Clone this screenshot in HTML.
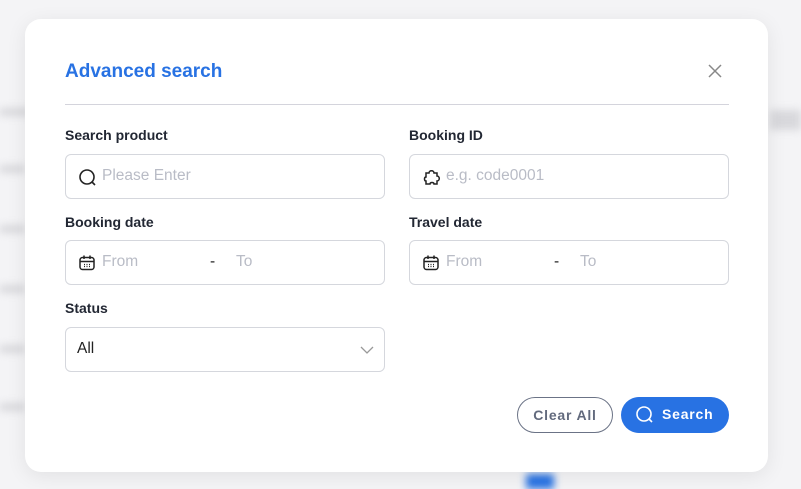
<!DOCTYPE html>
<html><head><style>
body{margin:0;width:801px;height:489px;background:#f4f4f6;font-family:"Liberation Sans",sans-serif;position:relative;overflow:hidden}
.bg{position:absolute;filter:blur(4px);background:#d8d8dc;height:8px}
.modal{position:absolute;left:25px;top:19px;width:743px;height:453px;background:#fff;border-radius:16px;box-shadow:0 4px 20px rgba(0,0,0,.08)}
.title{position:absolute;left:40px;top:42px;font-size:19px;font-weight:bold;color:#2872e3}
.close{position:absolute;left:682px;top:44px}
.hr{position:absolute;left:40px;top:85px;width:664px;height:1px;background:#d4d4dc}
.lbl{position:absolute;font-size:14px;font-weight:bold;color:#222733}
.inp{position:absolute;width:320px;height:45px;border:1px solid #d5d7dd;border-radius:6px;box-sizing:border-box}
.ph{position:absolute;top:12px;font-size:15.5px;color:#b9bcc6}
.ic{position:absolute;left:12px;top:13px}
.btn{position:absolute;top:378px;height:36px;border-radius:18px;box-sizing:border-box;font-size:14px;font-weight:bold;letter-spacing:0.8px;line-height:34px;text-align:center}
</style></head><body>
<div class="bg" style="left:0;top:108px;width:30px"></div>
<div class="bg" style="left:770px;top:110px;width:31px;height:20px"></div>
<div class="bg" style="left:0;top:165px;width:25px"></div>
<div class="bg" style="left:0;top:225px;width:25px"></div>
<div class="bg" style="left:0;top:285px;width:25px"></div>
<div class="bg" style="left:0;top:345px;width:25px"></div>
<div class="bg" style="left:0;top:403px;width:25px"></div>
<div class="bg" style="left:526px;top:474px;width:28px;height:15px;background:#2872e3"></div>
<div class="modal">
<div class="title">Advanced search</div>
<svg class="close" width="16" height="16" viewBox="0 0 16 16"><path d="M2 2L14 14M14 2L2 14" stroke="#888" stroke-width="1.5"/></svg>
<div class="hr"></div>
<div class="lbl" style="left:40px;top:108px">Search product</div>
<div class="inp" style="left:40px;top:135px"><svg class="ic" width="20" height="20" viewBox="0 0 20 20"><circle cx="9" cy="9" r="7" fill="none" stroke="#222" stroke-width="1.6"/><path d="M14 14L17 17" stroke="#222" stroke-width="1.6"/></svg><div class="ph" style="left:36px">Please Enter</div></div>
<div class="lbl" style="left:384px;top:108px">Booking ID</div>
<div class="inp" style="left:384px;top:135px"><svg class="ic" width="20" height="20" viewBox="0 0 20 20"><path d="M7 5C7 2 12 2 12 5L15 5L15 8C18 8 18 13 15 13L15 16L12 16C12 14 8 14 8 16L4 16L4 13C2 13 2 9 4 9L4 5Z" fill="none" stroke="#222" stroke-width="1.5"/></svg><div class="ph" style="left:36px">e.g. code0001</div></div>
<div class="lbl" style="left:40px;top:195px">Booking date</div>
<div class="inp" style="left:40px;top:221px"><svg class="ic" width="18" height="18" viewBox="0 0 18 18"><rect x="2" y="3.5" width="14" height="12" rx="2.5" fill="none" stroke="#222" stroke-width="1.5"/><path d="M2 7.5H16M6 1.5V5M12 1.5V5" stroke="#222" stroke-width="1.5"/><path d="M6 10.5h1M8.5 10.5h1M11 10.5h1M6 12.5h1M8.5 12.5h1M11 12.5h1" stroke="#222" stroke-width="1.2"/></svg><div class="ph" style="left:36px">From</div><div class="ph" style="left:144px;color:#222">-</div><div class="ph" style="left:170px">To</div></div>
<div class="lbl" style="left:384px;top:195px">Travel date</div>
<div class="inp" style="left:384px;top:221px"><svg class="ic" width="18" height="18" viewBox="0 0 18 18"><rect x="2" y="3.5" width="14" height="12" rx="2.5" fill="none" stroke="#222" stroke-width="1.5"/><path d="M2 7.5H16M6 1.5V5M12 1.5V5" stroke="#222" stroke-width="1.5"/><path d="M6 10.5h1M8.5 10.5h1M11 10.5h1M6 12.5h1M8.5 12.5h1M11 12.5h1" stroke="#222" stroke-width="1.2"/></svg><div class="ph" style="left:36px">From</div><div class="ph" style="left:144px;color:#222">-</div><div class="ph" style="left:170px">To</div></div>
<div class="lbl" style="left:40px;top:281px">Status</div>
<div class="inp" style="left:40px;top:308px"><div class="ph" style="left:11px;color:#222">All</div><svg style="position:absolute;left:294px;top:17px" width="14" height="10" viewBox="0 0 14 10"><path d="M1 2L7 8L13 2" fill="none" stroke="#999" stroke-width="1.3"/></svg></div>
<div class="btn" style="left:492px;width:96px;border:1px solid #6b7386;color:#626a7d">Clear All</div>
<div class="btn" style="left:596px;width:108px;background:#2872e3;color:#fff"><svg style="position:absolute;left:14px;top:8px" width="20" height="20" viewBox="0 0 20 20"><circle cx="9" cy="9" r="7" fill="none" stroke="#fff" stroke-width="1.6"/><path d="M14 14L17 17" stroke="#fff" stroke-width="1.6"/></svg><span style="position:absolute;left:41px">Search</span></div>
</div>
</body></html>
